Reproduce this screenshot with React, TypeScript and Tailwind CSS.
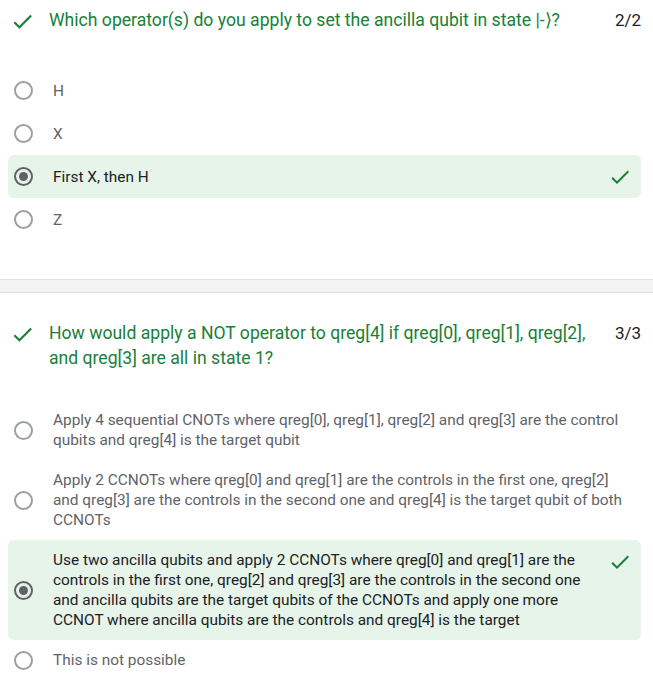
const CheckIcon = ({ className = "" }: { className?: string }) => (
  <svg viewBox="0 0 24 24" className={className} fill="#188038">
    <path d="M9 16.17L4.83 12l-1.42 1.41L9 19 21 7l-1.41-1.41z" />
  </svg>
);

const Radio = ({ checked }: { checked?: boolean }) =>
  checked ? (
    <div className="flex h-[19px] w-[19px] shrink-0 items-center justify-center rounded-full border-2 border-[#5f6368]">
      <div className="h-[9px] w-[9px] rounded-full bg-[#5f6368]" />
    </div>
  ) : (
    <div className="h-[19px] w-[19px] shrink-0 rounded-full border-2 border-[#9aa0a6]" />
  );

type Option = { label: string; correct?: boolean };

const OptionRow = ({ option, tall }: { option: Option; tall?: boolean }) => (
  <div
    className={`mr-3 ml-2 flex items-center rounded-md pl-[6px] ${
      tall ? "h-[43px] pr-[9px]" : "py-[10px] pr-[13px]"
    } ${option.correct ? "bg-[#e6f4ea]" : ""}`}
  >
    <Radio checked={option.correct} />
    <span
      className={`ml-[20px] flex-1 text-[15.4px] leading-[20px] ${
        option.correct ? "text-[#202124]" : "text-[#5f6368]"
      }`}
    >
      {option.label}
    </span>
    {option.correct && (
      <CheckIcon
        className={`ml-4 h-6 w-6 shrink-0 ${tall ? "" : "-mr-[4px] self-start"}`}
      />
    )}
  </div>
);

const Question = ({
  title,
  score,
}: {
  title: string;
  score: string;
}) => (
  <div className="flex items-start pr-3 pl-[10px]">
    <CheckIcon className="mt-[1px] h-[25px] w-[25px] shrink-0" />
    <h2 className="ml-[14px] flex-1 text-[17.6px] leading-[25px] text-[#188038]">
      {title}
    </h2>
    <span className="ml-5 text-[17px] leading-[25px] text-[#202124]">
      {score}
    </span>
  </div>
);

const first: Option[] = [
  { label: "H" },
  { label: "X" },
  { label: "First X, then H", correct: true },
  { label: "Z" },
];

const second: Option[] = [
  {
    label:
      "Apply 4 sequential CNOTs where qreg[0], qreg[1], qreg[2] and qreg[3] are the control qubits and qreg[4] is the target qubit",
  },
  {
    label:
      "Apply 2 CCNOTs where qreg[0] and qreg[1] are the controls in the first one, qreg[2] and qreg[3] are the controls in the second one and qreg[4] is the target qubit of both CCNOTs",
  },
  {
    label:
      "Use two ancilla qubits and apply 2 CCNOTs where qreg[0] and qreg[1] are the controls in the first one, qreg[2] and qreg[3] are the controls in the second one and ancilla qubits are the target qubits of the CCNOTs and apply one more CCNOT where ancilla qubits are the controls and qreg[4] is the target",
    correct: true,
  },
  { label: "This is not possible" },
];

export default function App() {
  return (
    <div
      className="h-[686px] w-[653px] overflow-hidden bg-white"
      style={{ fontFamily: "Roboto, 'Liberation Sans', sans-serif" }}
    >
      <section className="pt-[8px]">
        <Question
          title="Which operator(s) do you apply to set the ancilla qubit in state |-⟩?"
          score="2/2"
        />
        <div className="mt-[35px]">
          {first.map((o) => (
            <OptionRow key={o.label} option={o} tall />
          ))}
        </div>
      </section>

      <div className="mt-[38px] h-[14px] border-y border-[#e0e0e0] bg-[#f3f3f3]" />

      <section className="pt-[28px]">
        <Question
          title="How would apply a NOT operator to qreg[4] if qreg[0], qreg[1], qreg[2], and qreg[3] are all in state 1?"
          score="3/3"
        />
        <div className="mt-[29px]">
          {second.map((o) => (
            <OptionRow key={o.label} option={o} />
          ))}
        </div>
      </section>
    </div>
  );
}
